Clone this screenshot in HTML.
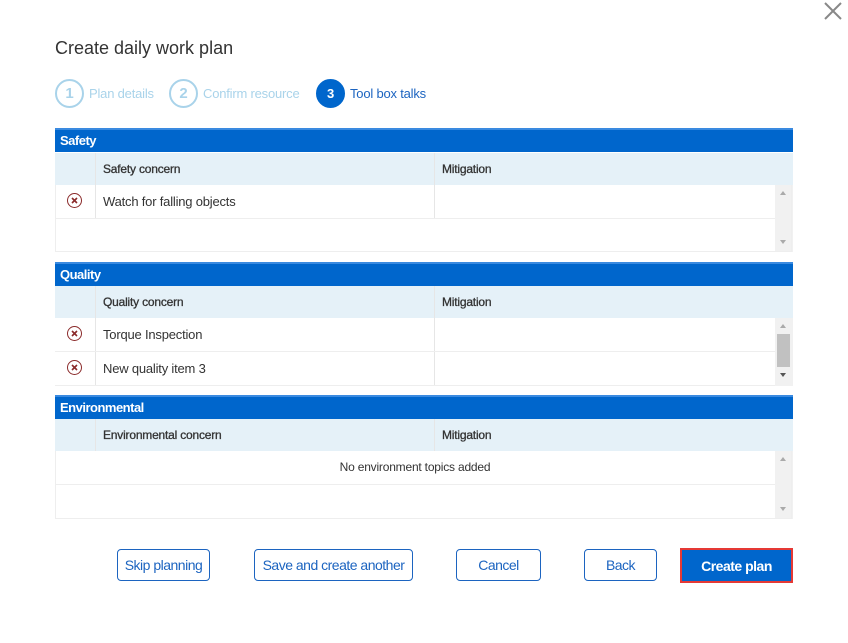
<!DOCTYPE html><html><head><style>
body{margin:0;width:848px;height:643px;background:#fff;font-family:"Liberation Sans",Arial,sans-serif;position:relative;overflow:hidden}
.a{position:absolute}
.t{font-size:18px;color:#333}
.step{position:absolute;top:79px;height:28px;display:flex;align-items:center;font-size:13px;letter-spacing:-0.2px}
.c{border-radius:50%;border:2px solid #a9d3ea;color:#a9d3ea;display:flex;align-items:center;justify-content:center;font-size:15px;font-weight:bold;margin-right:5px;box-sizing:border-box;width:29px;height:29px}
.bar{position:absolute;left:55px;width:738px;height:24px;background:#0066cc;border-top:2px solid #3a8ae0;box-sizing:border-box;color:#fff;font-weight:bold;font-size:13px;line-height:22px;padding-left:5px;letter-spacing:-0.5px}
.hd{position:absolute;left:55px;width:738px;height:32px;background:#e5f1f8;font-size:12px;color:#333;font-weight:bold;letter-spacing:-0.2px}
.hd span{font-weight:normal;-webkit-text-stroke:0.3px #333}
.row{position:absolute;left:55px;width:720px;height:33px;background:#fff;border-bottom:1px solid #eee;font-size:13px;color:#333;letter-spacing:-0.2px}
.v1{position:absolute;left:40px;top:0;bottom:0;border-left:1px solid #e6e6e6}
.v2{position:absolute;left:379px;top:0;bottom:0;border-left:1px solid #e6e6e6}
.sb{position:absolute;left:775px;width:18px;background:#f1f1f1}
.x{position:absolute;left:12px;top:8px;width:13px;height:13px;border:1.7px solid #8b2b2b;border-radius:50%}
.btn{position:absolute;top:549px;height:32px;border:1px solid #1c64c0;border-radius:4px;color:#1c64c0;font-size:14px;display:flex;align-items:center;justify-content:center;box-sizing:border-box;background:#fff;letter-spacing:-0.5px}
.l{position:absolute;left:48px;top:9px}
.m{position:absolute;left:387px;top:9px}
.up,.dn{position:absolute;left:780px;width:0;height:0;border-left:3px solid transparent;border-right:3px solid transparent}
.up{border-bottom:4px solid #aaa}.dn{border-top:4px solid #555}
</style></head><body>
<svg width="0" height="0" style="position:absolute"><defs><symbol id="xx" viewBox="0 0 13 13"><path d="M4 4L9 9M9 4L4 9" stroke="#8b2b2b" stroke-width="1.6"/></symbol></defs></svg>
<svg class="a" style="left:823px;top:1px" width="20" height="20"><path d="M2 2L18 18M18 2L2 18" stroke="#888" stroke-width="2"/></svg>
<div class="a t" style="left:55px;top:38px">Create daily work plan</div>
<div class="step" style="left:55px;color:#a9d3ea"><div class="c">1</div>Plan details</div>
<div class="step" style="left:169px;color:#a9d3ea"><div class="c">2</div>Confirm resource</div>
<div class="step" style="left:316px;color:#1c64c0"><div class="c" style="background:#0066cc;border-color:#0066cc;color:#fff;font-size:13px">3</div>Tool box talks</div>

<div class="bar" style="top:128px">Safety</div>
<div class="hd" style="top:153px"><div class="v1"></div><div class="v2"></div><span class="l">Safety concern</span><span class="m">Mitigation</span></div>
<div class="sb" style="top:185px;height:67px"></div>
<div class="up" style="top:191px"></div><div class="dn" style="top:240px;border-top-color:#aaa"></div>
<div class="row" style="top:185px"><div class="v1"></div><div class="v2"></div><svg class="x" viewBox="0 0 13 13"><use href="#xx"/></svg><span class="l">Watch for falling objects</span></div>
<div class="row" style="top:219px;border:0"></div>
<div class="a" style="left:55px;top:185px;width:737px;height:67px;border:1px solid #eee;border-top:0;box-sizing:border-box"></div>

<div class="bar" style="top:262px">Quality</div>
<div class="hd" style="top:286px"><div class="v1"></div><div class="v2"></div><span class="l">Quality concern</span><span class="m">Mitigation</span></div>
<div class="sb" style="top:318px;height:68px"></div>
<div class="up" style="top:324px"></div><div class="dn" style="top:373px"></div>
<div class="a" style="left:777px;top:334px;width:13px;height:33px;background:#c1c1c1"></div>
<div class="row" style="top:318px"><div class="v1"></div><div class="v2"></div><svg class="x" viewBox="0 0 13 13"><use href="#xx"/></svg><span class="l">Torque Inspection</span></div>
<div class="row" style="top:352px"><div class="v1"></div><div class="v2"></div><svg class="x" viewBox="0 0 13 13"><use href="#xx"/></svg><span class="l">New quality item 3</span></div>

<div class="bar" style="top:395px">Environmental</div>
<div class="hd" style="top:419px"><div class="v1"></div><div class="v2"></div><span class="l">Environmental concern</span><span class="m">Mitigation</span></div>
<div class="sb" style="top:451px;height:68px"></div>
<div class="up" style="top:457px"></div><div class="dn" style="top:507px;border-top-color:#aaa"></div>
<div class="row" style="top:451px;font-size:12px"><span style="position:absolute;left:0;right:0;top:9px;text-align:center">No environment topics added</span></div>
<div class="a" style="left:55px;top:451px;width:737px;height:68px;border:1px solid #eee;border-top:0;box-sizing:border-box"></div>

<div class="btn" style="left:117px;width:93px">Skip planning</div>
<div class="btn" style="left:254px;width:159px">Save and create another</div>
<div class="btn" style="left:456px;width:85px">Cancel</div>
<div class="btn" style="left:584px;width:73px">Back</div>
<div class="btn" style="left:680px;width:113px;top:548px;height:35px;background:#0066cc;color:#fff;font-weight:bold;border:2px solid #e53935;border-radius:0">Create plan</div>
</body></html>
